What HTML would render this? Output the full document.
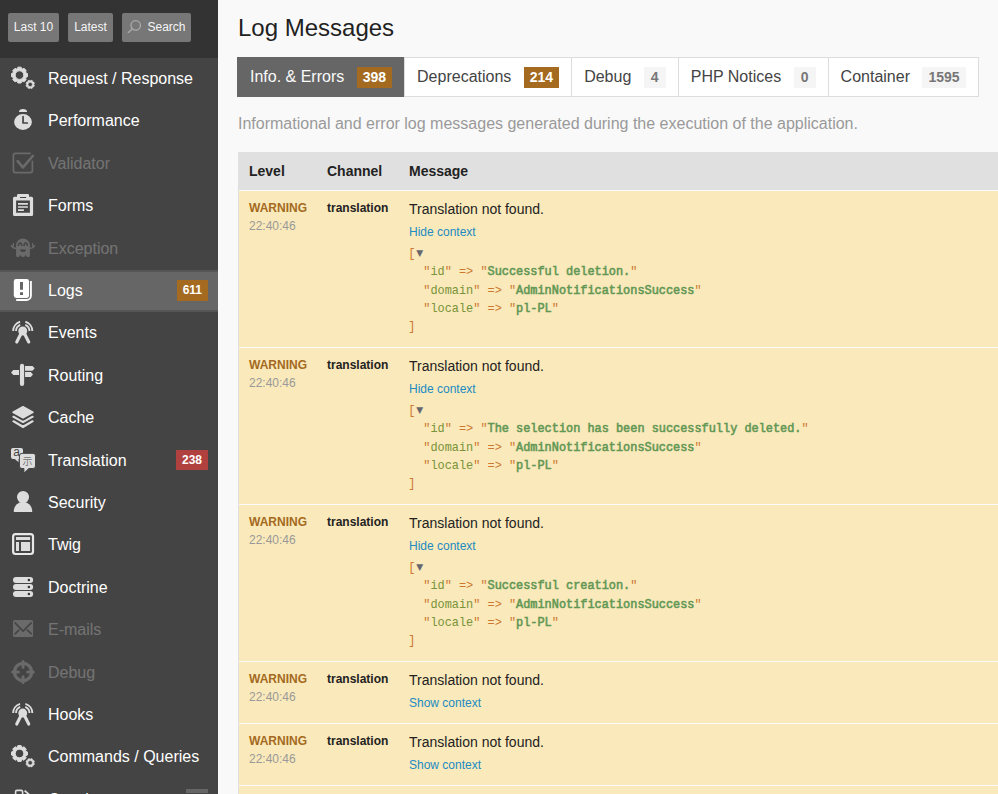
<!DOCTYPE html>
<html lang="en">
<head>
<meta charset="utf-8">
<title>Log Messages</title>
<style>
*{box-sizing:content-box}
html,body{margin:0;padding:0}
body{background:#F9F9F9;color:#222;font:14px/1.4 "Liberation Sans",Arial,Helvetica,sans-serif;width:998px;height:794px;overflow:hidden;position:relative}
#sidebar{position:absolute;left:0;top:0;width:218px;height:794px;background:#444;overflow:hidden}
#shortcuts{position:absolute;left:0;top:0;width:218px;height:58px;background:#333}
.btn{position:absolute;top:13px;height:29px;line-height:28.6px;background:#777;color:#F5F5F5;font-size:12px;border-radius:2px;text-align:center;white-space:nowrap}
#menu{position:absolute;left:0;top:58px;width:218px;margin:0;padding:0;list-style:none}
#menu li{position:relative;height:38.4px;border:solid transparent;border-width:2px 0;margin:0;padding:0}
#menu li.selected{background:#666;border-color:#555}
#menu li strong{position:absolute;left:48px;top:8px;font-size:16px;line-height:22.4px;font-weight:normal;color:#FFF;white-space:nowrap}
#menu li svg{position:absolute;left:10px;top:7px;width:28px;height:24px}
#menu li.disabled strong,#menu li.disabled svg{opacity:.25}
#menu .count{position:absolute;right:10px;top:8px;background:#666;color:#FFF;font-size:12px;font-weight:bold;line-height:16.8px;padding:2px 6px;text-align:center}
#menu .warn{background:#A46A1F}
#menu .err{background:#B0413E}
#content{position:absolute;left:238px;top:0;width:760px}
h2{position:absolute;left:0;top:11px;margin:0;font-size:24px;line-height:33.6px;font-weight:normal;color:#222;white-space:nowrap}
#tabs{position:absolute;left:0;top:57px;margin:0;padding:0;list-style:none;white-space:nowrap;font-size:0}
#tabs li{display:inline-block;background:#FFF;border:1px solid #DDD;color:#444;font-size:16px;line-height:22.4px;margin:0 0 0 -1px;padding:8px 12px;position:relative;vertical-align:top}
#tabs li.active{background:#666;border-color:#666;color:#FAFAFA}
.badge{display:inline-block;background:#F5F5F5;color:#777;font-size:14px;font-weight:bold;line-height:18.8px;padding:1px 6px;min-width:10px;text-align:center;margin-left:8px;vertical-align:0}
.badge.warn{background:#A46A1F;color:#FFF}
p.help{position:absolute;left:0;top:113px;margin:0;font-size:16px;line-height:22.4px;color:#999;white-space:nowrap}
table{position:absolute;left:0;top:152px;width:780px;border-collapse:separate;border-spacing:0;background:#FFF;border-left:1px solid #E0E0E0}
th{background:#E0E0E0;font-weight:bold;text-align:left;padding:8px 10px;line-height:22px;font-size:14px;color:#222}
td{background:#FAE9BA;border-top:1px solid #FAFAFA;padding:8px 10px 9px;vertical-align:top;font-size:14px}
td.lv,td.ch{font-size:12px;line-height:18px;padding-top:8px;white-space:nowrap}
.w{font-weight:bold;color:#A46A1F}
.tm{color:#999}
td.ch{font-weight:bold;color:#222}
td.msg{line-height:19.6px;color:#222;padding-top:8.6px;padding-bottom:10.8px}
a.tg{display:block;margin:5px 0 0.2px;font-size:12px;line-height:16.8px;color:#218BC3}
pre.dump{margin:4.2px 0 0;padding:0;font:11.9px/18.2px "Liberation Mono","DejaVu Sans Mono",monospace;color:#CC7832;white-space:pre}
.n{color:#CC7832}.k{color:#789339}.s{color:#629755;font-weight:normal;-webkit-text-stroke:0.55px #629755}
.b{position:relative;left:-0.8px}
.ar{color:#66676E;font-family:"DejaVu Sans",sans-serif;font-size:9px;line-height:1;vertical-align:0.8px;margin-left:0.2px}
</style>
</head>
<body>
<div id="sidebar">
<div id="shortcuts">
<span class="btn" style="left:8px;width:51px">Last 10</span>
<span class="btn" style="left:68px;width:45px">Latest</span>
<span class="btn" style="left:122px;width:69px"><svg width="14" height="14" viewBox="0 0 14 14" style="position:absolute;left:5px;top:6px"><circle cx="8.7" cy="6.4" r="4.7" fill="none" stroke="#AAA" stroke-width="1.3"/><path d="M5.1 10 L1.4 13.5" stroke="#AAA" stroke-width="1.4" stroke-linecap="round"/></svg><span style="padding-left:20px">Search</span></span>
</div>
<ul id="menu">
<li><strong>Request / Response</strong></li>
<li><strong>Performance</strong></li>
<li class="disabled"><strong>Validator</strong></li>
<li><strong>Forms</strong></li>
<li class="disabled"><strong>Exception</strong></li>
<li class="selected"><strong>Logs</strong><span class="count warn">611</span></li>
<li><strong>Events</strong></li>
<li><strong>Routing</strong></li>
<li><strong>Cache</strong></li>
<li><strong>Translation</strong><span class="count err">238</span></li>
<li><strong>Security</strong></li>
<li><strong>Twig</strong></li>
<li><strong>Doctrine</strong></li>
<li class="disabled"><strong>E-mails</strong></li>
<li class="disabled"><strong style="top:8.8px">Debug</strong></li>
<li><strong>Hooks</strong></li>
<li><strong>Commands / Queries</strong></li>
<li><strong style="top:8.8px">Guzzle</strong><span class="count" style="width:10px;top:8.2px;height:4px;padding-top:0;padding-bottom:0;overflow:hidden;line-height:26px">0</span></li>
</ul>
<svg id="icons" width="218" height="794" viewBox="0 0 218 794" style="position:absolute;left:0;top:0;pointer-events:none">
<path fill-rule="evenodd" fill="#DDD" stroke="#DDD" stroke-width="1" stroke-linejoin="round" d="M26.09 73.06 L27.44 73.49 L27.44 76.71 L26.09 77.14 L25.60 78.32 L26.25 79.58 L23.98 81.85 L22.72 81.20 L21.54 81.69 L21.11 83.04 L17.89 83.04 L17.46 81.69 L16.28 81.20 L15.02 81.85 L12.75 79.58 L13.40 78.32 L12.91 77.14 L11.56 76.71 L11.56 73.49 L12.91 73.06 L13.40 71.88 L12.75 70.62 L15.02 68.35 L16.28 69.00 L17.46 68.51 L17.89 67.16 L21.11 67.16 L21.54 68.51 L22.72 69.00 L23.98 68.35 L26.25 70.62 L25.60 71.88Z M15.20 75.10 a4.30 4.30 0 1 0 8.60 0 a4.30 4.30 0 1 0 -8.60 0Z"/><path fill-rule="evenodd" fill="#DDD" stroke="#DDD" stroke-width="0.7" stroke-linejoin="round" d="M33.78 84.73 L34.42 85.22 L33.77 86.80 L32.97 86.70 L32.50 87.17 L32.60 87.97 L31.02 88.62 L30.53 87.98 L29.87 87.98 L29.38 88.62 L27.80 87.97 L27.90 87.17 L27.43 86.70 L26.63 86.80 L25.98 85.22 L26.62 84.73 L26.62 84.07 L25.98 83.58 L26.63 82.00 L27.43 82.10 L27.90 81.63 L27.80 80.83 L29.38 80.18 L29.87 80.82 L30.53 80.82 L31.02 80.18 L32.60 80.83 L32.50 81.63 L32.97 82.10 L33.77 82.00 L34.42 83.58 L33.78 84.07Z M27.95 84.40 a2.25 2.25 0 1 0 4.50 0 a2.25 2.25 0 1 0 -4.50 0Z"/>
<ellipse cx="23" cy="122" rx="8.9" ry="7.9" fill="#DDD"/>
<path d="M19 112.1 Q19 109.1 23 109.1 Q27.1 109.1 27.1 112.1Z" fill="#DDD"/>
<path d="M23.05 116.6 V123 H27.3" stroke="#444" stroke-width="1.7" fill="none" stroke-linecap="round" stroke-linejoin="round"/>
<g opacity=".25"><path d="M30 153.4 H15.4 a2 2 0 0 0 -2 2 V170.6 a2 2 0 0 0 2 2 H30.4 a2 2 0 0 0 2 -2 V161.4" stroke="#DDD" stroke-width="1.7" fill="none" stroke-linecap="round"/><path d="M17.6 161.2 L22.9 167.4 L32.8 156" stroke="#DDD" stroke-width="2.6" fill="none" stroke-linecap="round" stroke-linejoin="round"/></g>
<path fill-rule="evenodd" fill="#DDD" d="M14.5 196.8 H17 V195.4 a1.3 1.3 0 0 1 1.3 -1.3 H27.8 a1.3 1.3 0 0 1 1.3 1.3 V196.8 H31.6 a1.5 1.5 0 0 1 1.5 1.5 V214.6 a1.5 1.5 0 0 1 -1.5 1.5 H14.5 a1.5 1.5 0 0 1 -1.5 -1.5 V198.3 a1.5 1.5 0 0 1 1.5 -1.5Z M16.1 200.4 V212.8 H29.9 V200.4Z M20 197 H26.1 V198 H20Z"/>
<path fill="#DDD" d="M18 203.1 H27.9 V204.7 H18Z M18 206.15 H27.9 V207.85 H18Z M18 209.2 H23.9 V210.9 H18Z"/>
<g opacity=".25"><path fill="#DDD" d="M16.1 255.5 V245.5 a6.9 6.9 0 0 1 13.8 0 V255.5 a1.5 1.5 0 0 1 -1.5 1.5 h-0.9 q-1.2 0 -1.6 -1.7 h-0.6 q-0.4 1.7 -1.6 1.7 h-1.4 q-1.2 0 -1.6 -1.7 h-0.6 q-0.4 1.7 -1.6 1.7 h-0.9 a1.5 1.5 0 0 1 -1.5 -1.5Z"/><path d="M16.4 248.4 Q12.8 248.4 11.4 245.6 M13 247.6 L13.4 243.6 M29.6 248.4 Q33.2 248.4 34.6 245.8 M33 247.6 L32.6 243.6" stroke="#DDD" stroke-width="1.3" fill="none" stroke-linecap="round"/><path d="M18.4 246.1 a1.7 3.2 0 0 1 3.4 0 M24 246.1 a1.7 3.2 0 0 1 3.4 0" stroke="#444" stroke-width="1.5" fill="none"/><path d="M20 249.4 H25.9 a2.95 2.5 0 0 1 -5.9 0Z" fill="#444"/></g>
<rect x="13.8" y="279" width="15.3" height="19" rx="2.4" fill="#FFF"/>
<path d="M20 282.1 H23 V289.75 H20Z M20 292.2 H23 V294.9 H20Z" fill="#666"/>
<path d="M30.95 281 V295.6 a4.4 4.4 0 0 1 -4.4 4.4 H16.2" stroke="#FFF" stroke-width="1.8" fill="none" stroke-linecap="butt"/>
<circle cx="22.74" cy="331.00" r="4.45" fill="#DDD"/><path d="M21.54 332.50 L16.74 342.00 M23.94 332.50 L28.74 342.00" stroke="#DDD" stroke-width="3.1" stroke-linecap="round" fill="none"/><path d="M13.14 331.00 A9.60 9.60 0 0 1 20.09 321.77 M16.04 331.00 A6.70 6.70 0 0 1 20.23 324.79 M32.34 331.00 A9.60 9.60 0 0 0 25.39 321.77 M29.44 331.00 A6.70 6.70 0 0 0 25.25 324.79" stroke="#DDD" stroke-width="1.9" fill="none"/>
<path d="M22.03 365.9 V384" stroke="#DDD" stroke-width="4.2" stroke-linecap="round"/>
<path fill="#DDD" d="M25.05 366 H32.5 L34.7 368.35 L32.5 370.7 H25.05Z M25.05 372.1 H30.8 L33 374.6 L30.8 377.1 H25.05Z M19 370 H13.3 L11.05 372.45 L13.3 374.9 H19Z"/>
<path d="M23 415.40 L32.9 421.40 L23 427.40 L13.1 421.40 Z" fill="#DDD" stroke-linejoin="round" stroke="#DDD" stroke-width="1.6"/>
<path d="M23 412.20 L32.9 417.80 L23 423.40 L13.1 417.80 Z" fill="#DDD" stroke-linejoin="round" stroke="#444" stroke-width="3.4"/>
<path d="M23 411.20 L32.9 416.80 L23 422.40 L13.1 416.80 Z" fill="#DDD" stroke-linejoin="round" stroke="#DDD" stroke-width="1.6"/>
<path d="M23 407.70 L32.9 413.30 L23 418.90 L13.1 413.30 Z" fill="#DDD" stroke-linejoin="round" stroke="#444" stroke-width="3.4"/>
<path d="M23 406.70 L32.9 412.30 L23 417.90 L13.1 412.30 Z" fill="#DDD" stroke-linejoin="round" stroke="#DDD" stroke-width="1.6"/>
<path fill="#DDD" d="M13 448.1 H21 a2 2 0 0 1 2 2 V456.9 a2 2 0 0 1 -2 2 H18.6 V462.2 L14.8 458.9 H13 a2 2 0 0 1 -2 -2 V450.1 a2 2 0 0 1 2 -2Z"/>
<path fill="#DDD" stroke="#444" stroke-width="1" d="M21.9 453.35 H33 a2.5 2.5 0 0 1 2.5 2.5 V466 a2.5 2.5 0 0 1 -2.5 2.5 H28.9 L23.9 473.2 V468.5 H21.9 a2.5 2.5 0 0 1 -2.5 -2.5 V455.85 a2.5 2.5 0 0 1 2.5 -2.5Z"/>
<text x="16.6" y="456.4" font-family="Liberation Sans,sans-serif" font-size="12" fill="#444" text-anchor="middle">a</text>
<text x="27.45" y="465" font-family="Noto Sans CJK JP,Noto Sans CJK SC,sans-serif" font-weight="300" font-size="10" fill="#444" text-anchor="middle">示</text>
<circle cx="23.04" cy="497.1" r="6.05" fill="#DDD"/>
<path d="M13.8 512 V511 a9.2 9.3 0 0 1 18.4 0 V512Z" fill="#DDD"/>
<rect x="13.15" y="534.1" width="19.85" height="19.9" rx="2.4" fill="none" stroke="#E8E8E8" stroke-width="2.2"/>
<path fill="#DDD" d="M16 537 H30.1 V540 H16Z M16 542.1 H19 V550.9 H16Z M21 542.1 H30.1 V550.9 H21Z"/>
<rect x="13" y="577.0" width="20.1" height="6" rx="3" fill="#DDD"/>
<circle cx="28.9" cy="580.0" r="1.25" fill="#333"/>
<rect x="13" y="584.1" width="20.1" height="6" rx="3" fill="#DDD"/>
<circle cx="28.9" cy="587.1" r="1.25" fill="#333"/>
<rect x="13" y="591.1" width="20.1" height="6" rx="3" fill="#DDD"/>
<circle cx="28.9" cy="594.1" r="1.25" fill="#333"/>
<g opacity=".25"><rect x="13" y="620" width="20.1" height="17.1" rx="1.6" fill="#DDD"/></g>
<path d="M15.1 622.9 L23.04 631.1 L31.2 622.9 M15.1 633.9 L18.9 630.15 M31.2 633.7 L27.4 630.15" stroke="#444" stroke-width="1.6" fill="none" stroke-linecap="round" stroke-linejoin="round"/>
<g opacity=".25"><circle cx="23.04" cy="672" r="8.6" fill="none" stroke="#DDD" stroke-width="3.3"/><path d="M12.7 672 H18.4 M27.7 672 H33.3 M23.04 661.6 V667.2 M23.04 676.8 V682.4" stroke="#DDD" stroke-width="3" stroke-linecap="round"/></g>
<circle cx="22.74" cy="713.05" r="4.45" fill="#DDD"/><path d="M21.54 714.55 L16.74 724.05 M23.94 714.55 L28.74 724.05" stroke="#DDD" stroke-width="3.1" stroke-linecap="round" fill="none"/><path d="M13.14 713.05 A9.60 9.60 0 0 1 20.09 703.82 M16.04 713.05 A6.70 6.70 0 0 1 20.23 706.84 M32.34 713.05 A9.60 9.60 0 0 0 25.39 703.82 M29.44 713.05 A6.70 6.70 0 0 0 25.25 706.84" stroke="#DDD" stroke-width="1.9" fill="none"/>
<path fill-rule="evenodd" fill="#DDD" stroke="#DDD" stroke-width="1" stroke-linejoin="round" d="M26.09 751.46 L27.44 751.89 L27.44 755.11 L26.09 755.54 L25.60 756.72 L26.25 757.98 L23.98 760.25 L22.72 759.60 L21.54 760.09 L21.11 761.44 L17.89 761.44 L17.46 760.09 L16.28 759.60 L15.02 760.25 L12.75 757.98 L13.40 756.72 L12.91 755.54 L11.56 755.11 L11.56 751.89 L12.91 751.46 L13.40 750.28 L12.75 749.02 L15.02 746.75 L16.28 747.40 L17.46 746.91 L17.89 745.56 L21.11 745.56 L21.54 746.91 L22.72 747.40 L23.98 746.75 L26.25 749.02 L25.60 750.28Z M15.20 753.50 a4.30 4.30 0 1 0 8.60 0 a4.30 4.30 0 1 0 -8.60 0Z"/><path fill-rule="evenodd" fill="#DDD" stroke="#DDD" stroke-width="0.7" stroke-linejoin="round" d="M33.78 763.13 L34.42 763.62 L33.77 765.20 L32.97 765.10 L32.50 765.57 L32.60 766.37 L31.02 767.02 L30.53 766.38 L29.87 766.38 L29.38 767.02 L27.80 766.37 L27.90 765.57 L27.43 765.10 L26.63 765.20 L25.98 763.62 L26.62 763.13 L26.62 762.47 L25.98 761.98 L26.63 760.40 L27.43 760.50 L27.90 760.03 L27.80 759.23 L29.38 758.58 L29.87 759.22 L30.53 759.22 L31.02 758.58 L32.60 759.23 L32.50 760.03 L32.97 760.50 L33.77 760.40 L34.42 761.98 L33.78 762.47Z M27.95 762.80 a2.25 2.25 0 1 0 4.50 0 a2.25 2.25 0 1 0 -4.50 0Z"/>
<rect x="15.6" y="790.4" width="7" height="12" rx="1.4" fill="none" stroke="#DDD" stroke-width="1.6"/>
<path d="M24.6 790.6 L29 794.5" stroke="#DDD" stroke-width="1.8" fill="none"/>
</svg>
</div>
<div id="content">
<h2>Log Messages</h2>
<ul id="tabs">
<li class="active">Info. &amp; Errors <span class="badge warn">398</span></li><li>Deprecations <span class="badge warn">214</span></li><li>Debug <span class="badge">4</span></li><li>PHP Notices <span class="badge">0</span></li><li>Container <span class="badge">1595</span></li>
</ul>
<p class="help">Informational and error log messages generated during the execution of the application.</p>
<table>
<thead><tr><th style="width:58px">Level</th><th style="width:62px">Channel</th><th>Message</th></tr></thead>
<tbody id="rows">
<tr><td class="lv"><span class="w">WARNING</span><br><span class="tm">22:40:46</span></td><td class="ch">translation</td><td class="msg">Translation not found.<a class="tg">Hide context</a><pre class="dump"><span class="n b">[</span><span class="ar">▼</span>
  <span class="n">"</span><span class="k">id</span><span class="n">" =&gt; "</span><span class="s">Successful deletion.</span><span class="n">"</span>
  <span class="n">"</span><span class="k">domain</span><span class="n">" =&gt; "</span><span class="s">AdminNotificationsSuccess</span><span class="n">"</span>
  <span class="n">"</span><span class="k">locale</span><span class="n">" =&gt; "</span><span class="s">pl-PL</span><span class="n">"</span>
<span class="n b">]</span></pre></td></tr>
<tr><td class="lv"><span class="w">WARNING</span><br><span class="tm">22:40:46</span></td><td class="ch">translation</td><td class="msg">Translation not found.<a class="tg">Hide context</a><pre class="dump"><span class="n b">[</span><span class="ar">▼</span>
  <span class="n">"</span><span class="k">id</span><span class="n">" =&gt; "</span><span class="s">The selection has been successfully deleted.</span><span class="n">"</span>
  <span class="n">"</span><span class="k">domain</span><span class="n">" =&gt; "</span><span class="s">AdminNotificationsSuccess</span><span class="n">"</span>
  <span class="n">"</span><span class="k">locale</span><span class="n">" =&gt; "</span><span class="s">pl-PL</span><span class="n">"</span>
<span class="n b">]</span></pre></td></tr>
<tr><td class="lv"><span class="w">WARNING</span><br><span class="tm">22:40:46</span></td><td class="ch">translation</td><td class="msg">Translation not found.<a class="tg">Hide context</a><pre class="dump"><span class="n b">[</span><span class="ar">▼</span>
  <span class="n">"</span><span class="k">id</span><span class="n">" =&gt; "</span><span class="s">Successful creation.</span><span class="n">"</span>
  <span class="n">"</span><span class="k">domain</span><span class="n">" =&gt; "</span><span class="s">AdminNotificationsSuccess</span><span class="n">"</span>
  <span class="n">"</span><span class="k">locale</span><span class="n">" =&gt; "</span><span class="s">pl-PL</span><span class="n">"</span>
<span class="n b">]</span></pre></td></tr>
<tr><td class="lv"><span class="w">WARNING</span><br><span class="tm">22:40:46</span></td><td class="ch">translation</td><td class="msg">Translation not found.<a class="tg">Show context</a></td></tr>
<tr><td class="lv"><span class="w">WARNING</span><br><span class="tm">22:40:46</span></td><td class="ch">translation</td><td class="msg">Translation not found.<a class="tg">Show context</a></td></tr>
<tr><td class="lv"><span class="w">WARNING</span><br><span class="tm">22:40:46</span></td><td class="ch">translation</td><td class="msg">Translation not found.<a class="tg">Show context</a></td></tr>
</tbody>
</table>
</div>
</body>
</html>
